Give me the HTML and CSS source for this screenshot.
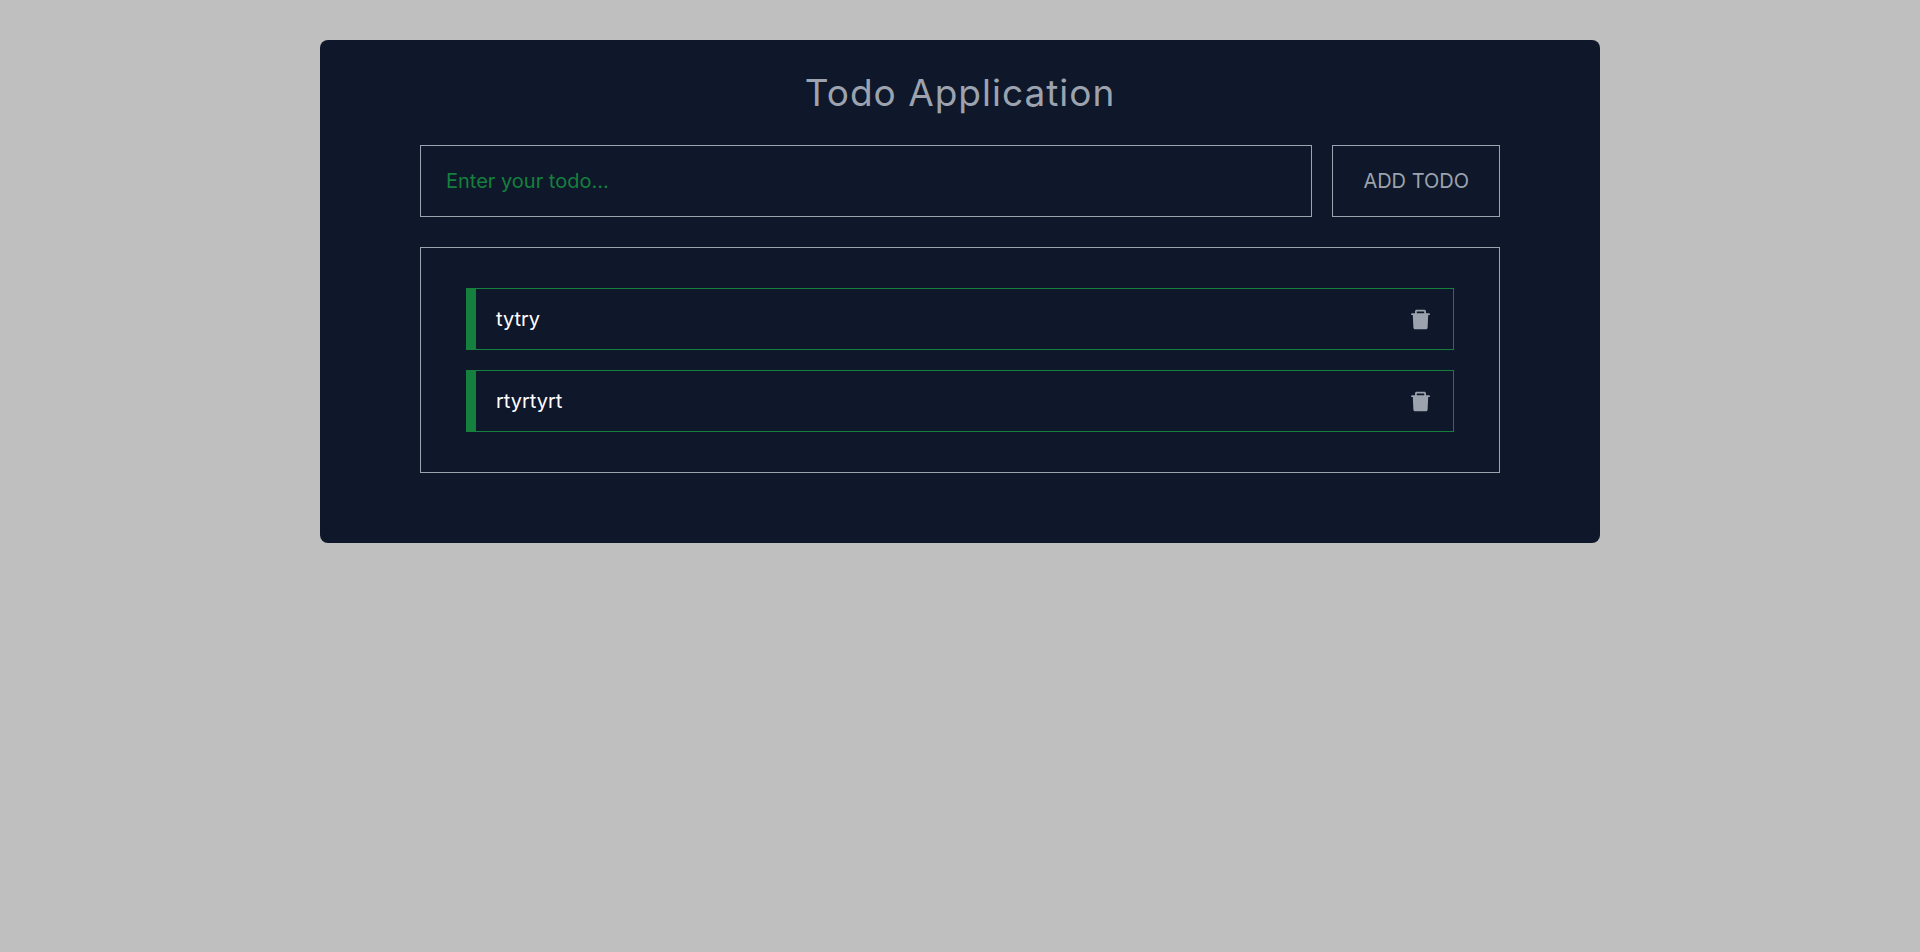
FILE: index.html
```html
<!DOCTYPE html>
<html lang="en">
<head>
<meta charset="utf-8">
<meta name="viewport" content="width=device-width, initial-scale=1">
<title>Todo Application</title>
<link rel="stylesheet" href="styles.css">
</head>
<body>
<svg class="sprite" aria-hidden="true">
  <symbol id="trash" viewBox="0 0 1024 1024">
    <path d="M864 256H736v-80c0-35.300-28.700-64-64-64H352c-35.300 0-64 28.700-64 64v80H160c-17.700 0-32 14.300-32 32v32c0 4.400 3.600 8 8 8h60.400l24.700 523c1.600 34.100 29.800 61 63.900 61h454c34.200 0 62.300-26.800 63.900-61l24.700-523H888c4.400 0 8-3.600 8-8v-32c0-17.700-14.300-32-32-32zm-200 0H360v-72h304v72z"/>
  </symbol>
</svg>
<main class="card">
  <h1 class="title">Todo Application</h1>
  <form class="form">
    <input class="input" type="text" placeholder="Enter your todo..." aria-label="Enter your todo">
    <button class="add" type="button">ADD TODO</button>
  </form>
  <ul class="list">
    <li class="item">
      <span>tytry</span>
      <button class="delete" type="button" aria-label="Delete tytry"><svg class="icon"><use href="#trash"/></svg></button>
    </li>
    <li class="item">
      <span>rtyrtyrt</span>
      <button class="delete" type="button" aria-label="Delete rtyrtyrt"><svg class="icon"><use href="#trash"/></svg></button>
    </li>
  </ul>
</main>
</body>
</html>
```

FILE: styles.css
```css
* {
  box-sizing: border-box;
  margin: 0;
  padding: 0;
}

body {
  padding: 40px 20px;
  background: #bfbfbf;
  color: #9ca3af;
  font-family: Inter, "Liberation Sans", sans-serif;
  font-size: 20px;
  line-height: 30px;
}

button,
input {
  border: 1px solid #9ca3af;
  background: transparent;
  color: inherit;
  font: inherit;
}

.sprite {
  display: none;
}

.card {
  max-width: 1280px;
  margin: 0 auto;
  padding: 30px 100px 70px;
  border-radius: 8px;
  background: #0f172a;
}

.title {
  margin-bottom: 30px;
  font-size: 37px;
  font-weight: 400;
  line-height: 45px;
  letter-spacing: 1px;
  text-align: center;
}

.form {
  display: flex;
  gap: 20px;
  margin-bottom: 30px;
}

.input {
  flex: 1;
  min-width: 0;
  padding: 20px 25px;
}

.input::placeholder {
  color: #15803d;
  opacity: 1;
}

.add {
  padding: 20px 30px;
}

.list {
  display: flex;
  flex-direction: column;
  gap: 20px;
  padding: 40px 45px;
  border: 1px solid #9ca3af;
  list-style: none;
}

.item {
  display: flex;
  align-items: center;
  justify-content: space-between;
  padding: 15px 20px;
  border: 1px solid #15803d;
  border-left-width: 10px;
  color: #fff;
}

.delete {
  display: flex;
  border: 0;
  color: #9ca3af;
  cursor: pointer;
}

.icon {
  width: 25px;
  height: 25px;
  fill: currentColor;
}
```
